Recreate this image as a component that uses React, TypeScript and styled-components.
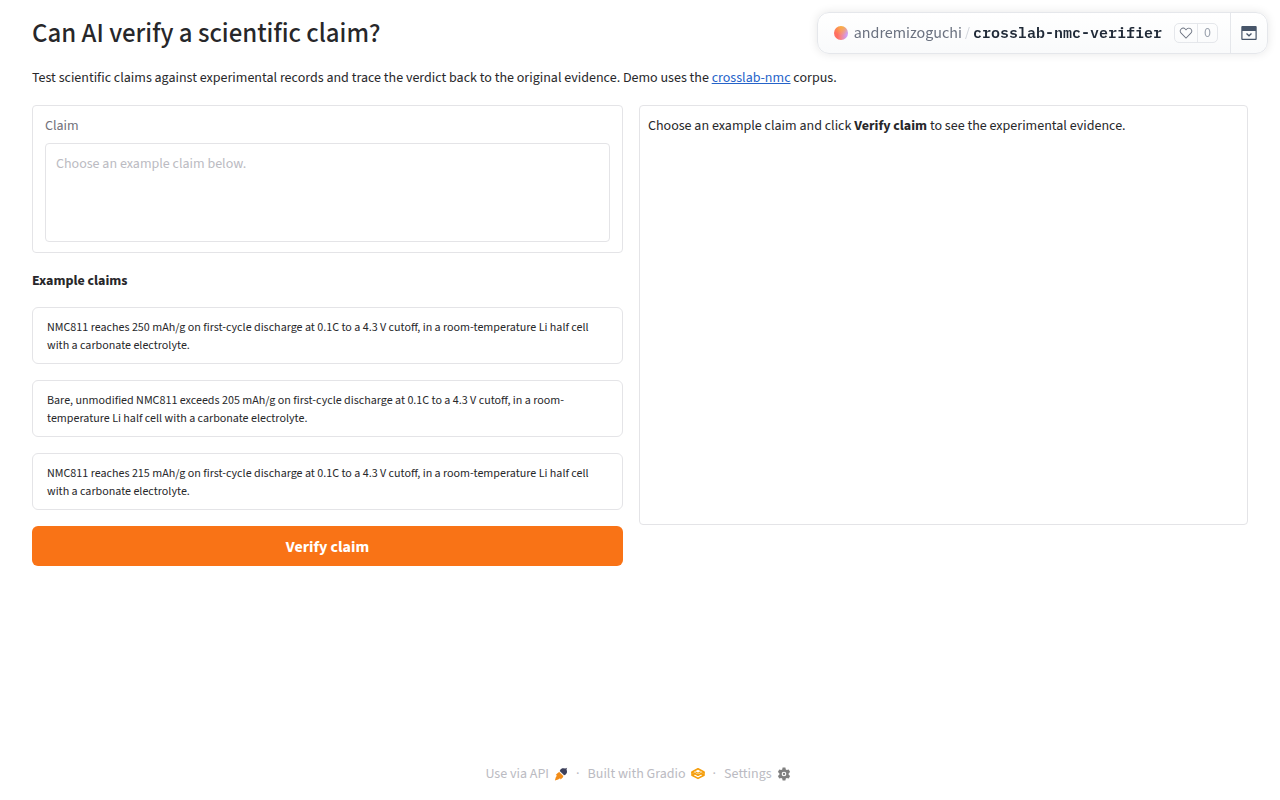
import React, { useState } from "react";
import styled, { createGlobalStyle } from "styled-components";

const sans = `"Source Sans 3", "Source Sans Pro", "Noto Sans CJK SC", sans-serif`;

const GlobalStyle = createGlobalStyle`
  *, *::before, *::after { box-sizing: border-box; }
  body {
    margin: 0;
    background: #ffffff;
    color: #27272a;
    font-family: ${sans};
    font-size: 14px;
    line-height: 20px;
  }
  button, textarea { font-family: inherit; }
`;

const Page = styled.div`
  display: flex;
  flex-direction: column;
  min-height: 100vh;
  padding: 16px 32px;
`;

const Main = styled.main`
  display: flex;
  flex-direction: column;
  flex: 1;
`;

const Title = styled.h1`
  margin: 0 0 17px;
  font-size: 27px;
  line-height: 35px;
  font-weight: 500;
`;

const Intro = styled.p`
  margin: 0 0 17px;
`;

const InlineLink = styled.a`
  color: #2563c9;
  text-decoration: underline;
`;

const Columns = styled.div`
  display: grid;
  grid-template-columns: minmax(0, 591fr) minmax(0, 609fr);
  gap: 16px;
  align-items: start;
`;

const Stack = styled.div`
  display: flex;
  flex-direction: column;
  gap: 16px;
`;

const Panel = styled.section`
  border: 1px solid #e4e4e7;
  border-radius: 4px;
  background: #ffffff;
`;

const ClaimPanel = styled(Panel)`
  display: flex;
  flex-direction: column;
  gap: 7px;
  padding: 10px 12px;
`;

const ResultPanel = styled(Panel)`
  min-height: 420px;
  padding: 10px 8px;
`;

const Label = styled.label`
  color: #71717a;
`;

const ClaimInput = styled.textarea`
  display: block;
  width: 100%;
  height: 99px;
  padding: 10px;
  border: 1px solid #e4e4e7;
  border-radius: 4px;
  background: #ffffff;
  color: #27272a;
  font-size: 14px;
  line-height: 20px;
  resize: none;
  &::placeholder { color: #bbbbc2; opacity: 1; }
`;

const Subheading = styled.h2`
  margin: 2px 0 0;
  font-size: 14px;
  line-height: 20px;
  font-weight: 700;
`;

const ExampleButton = styled.button`
  width: 100%;
  padding: 11px 14px 8px;
  border: 1px solid #e4e4e7;
  border-radius: 6px;
  background: #ffffff;
  color: #27272a;
  font-size: 12px;
  line-height: 18px;
  text-align: left;
  cursor: pointer;
`;

const VerifyButton = styled.button`
  width: 100%;
  height: 40px;
  padding: 2px 0 0;
  border: 0;
  border-radius: 6px;
  background: #f97316;
  color: #ffffff;
  font-size: 16px;
  line-height: 20px;
  font-weight: 700;
  cursor: pointer;
`;

const Footer = styled.footer`
  display: flex;
  justify-content: center;
  align-items: center;
  gap: 8px;
  padding-right: 4px;
  color: #bbbbc2;
  line-height: 20px;
`;

const FooterLink = styled.a`
  display: flex;
  align-items: center;
  gap: 5px;
  color: inherit;
  text-decoration: none;
`;

const SpaceBar = styled.header`
  position: fixed;
  top: 12px;
  right: 12px;
  display: flex;
  height: 42px;
  border: 1px solid #e5e7eb;
  border-radius: 12px;
  background: linear-gradient(to bottom, #ffffff, #f9fafb);
  box-shadow: 0 0 10px rgba(0, 0, 0, 0.1);
`;

const SpaceInfo = styled.div`
  display: flex;
  align-items: center;
  padding: 0 12px 0 16px;
  border-right: 1px solid #e5e7eb;
`;

const Avatar = styled.span`
  width: 14px;
  height: 14px;
  margin-right: 6px;
  border-radius: 50%;
  background:
    radial-gradient(circle at 55% 0%, #fbb03b 0%, rgba(251, 150, 60, 0) 60%),
    linear-gradient(90deg, #ff6f61 25%, #f6858c 50%, #cf9df5 90%);
`;

const Owner = styled.a`
  color: #6b7280;
  font-size: 16px;
  text-decoration: none;
`;

const Slash = styled.span`
  width: 11px;
  color: #d1d5db;
  font-size: 14px;
  text-align: center;
`;

const RepoName = styled.a`
  margin-right: 12px;
  color: #1f2937;
  font-family: "IBM Plex Mono", "Liberation Mono", monospace;
  font-size: 15px;
  font-weight: 600;
  text-decoration: none;
`;

const LikeGroup = styled.div`
  display: flex;
  height: 20px;
  border: 1px solid #e5e7eb;
  border-radius: 5px;
  overflow: hidden;
`;

const LikeButton = styled.button`
  display: flex;
  align-items: center;
  justify-content: center;
  width: 23px;
  padding: 0;
  border: 0;
  border-right: 1px solid #e5e7eb;
  background: none;
  color: #6b7280;
  cursor: pointer;
`;

const LikeCount = styled.button`
  width: 19px;
  padding: 0;
  border: 0;
  background: none;
  color: #9ca3af;
  font-size: 14px;
  line-height: 18px;
  cursor: pointer;
`;

const CollapseButton = styled.button`
  display: flex;
  align-items: center;
  justify-content: center;
  width: 36px;
  padding: 0;
  border: 0;
  background: none;
  color: #475569;
  cursor: pointer;
`;

const HeartIcon = () => (
  <svg width="14" height="14" viewBox="0 0 32 32" fill="currentColor" aria-hidden="true">
    <path d="M22.45 6a5.47 5.47 0 0 1 3.91 1.64 5.7 5.7 0 0 1 0 8L16 26.13 5.64 15.64a5.7 5.7 0 0 1 0-8 5.48 5.48 0 0 1 7.82 0l2.54 2.6 2.53-2.58A5.44 5.44 0 0 1 22.45 6m0-2a7.47 7.47 0 0 0-5.34 2.24L16 7.36l-1.11-1.12a7.49 7.49 0 0 0-10.68 0 7.72 7.72 0 0 0 0 10.82L16 29l11.79-11.94a7.72 7.72 0 0 0 0-10.82A7.49 7.49 0 0 0 22.45 4Z" />
  </svg>
);

const CollapseIcon = () => (
  <svg width="16" height="16" viewBox="0 0 16 16" fill="none" aria-hidden="true">
    <path fill="currentColor" fillRule="evenodd" d="M1.300 1h13.400a1 1 0 0 1 1 1v12a1 1 0 0 1-1 1H1.300a1 1 0 0 1-1-1V2a1 1 0 0 1 1-1ZM1.500 6v7.800h13V6h-13Z" />
    <path stroke="currentColor" strokeWidth="1.300" d="m5.500 8.500 2.500 2.300 2.500-2.300" />
  </svg>
);

const RocketIcon = () => (
  <svg width="14" height="14" viewBox="0 0 14 14" aria-hidden="true">
    <path fill="#3d405b" d="M13.200.800 12.500 2l.500 2.600c.1 1.200-.5 2.400-1.600 3.100l-1.300.5-4.400-4.300.7-1.200c.7-1 1.900-1.600 3.100-1.400l1.700.2Z" />
    <path fill="#f28c18" d="m5.500 4.700 4 4-.7 1.800-2.200 2.100-.5-1.300-2 1.300-3.200.9.800-3.100 1.200-1.900-1.200-.4 2-2.200Z" />
    <path fill="#fff" d="m5.400 4.200 4.400 4.300-.5.500-4.400-4.300Z" opacity=".8" />
  </svg>
);

const GradioIcon = () => (
  <svg width="14" height="14" viewBox="0 0 14 14" fill="none" stroke="#f59e0b" strokeWidth="1.600" strokeLinejoin="round" aria-hidden="true">
    <path d="M7 1.800 1 5l6 3.200L13 5Z" />
    <path d="M1 5v3.200l6 3.200 6-3.200V5M1 8.200l3-1.600M13 8.200l-3-1.600" />
    <path d="m4.300 4.800 2.700 1.400 2.700-1.400" strokeWidth="1.100" />
  </svg>
);

const GearIcon = () => (
  <svg width="14" height="14" viewBox="0 0 24 24" fill="#808080" aria-hidden="true">
    <path fillRule="evenodd" d="M9.600 1h4.800l.7 3.300 1.800 1 3.200-1.100 2.400 4.200-2.500 2.200v2.800l2.500 2.200-2.400 4.200-3.200-1.100-1.800 1-.7 3.300H9.600l-.7-3.300-1.800-1-3.200 1.100-2.400-4.200L4 13.400v-2.800L1.500 8.400l2.400-4.200 3.200 1.100 1.800-1ZM12 8a4 4 0 1 0 0 8 4 4 0 0 0 0-8Z" />
    <circle cx="12" cy="12" r="2" />
  </svg>
);

const examples = [
  "NMC811 reaches 250 mAh/g on first-cycle discharge at 0.1C to a 4.3 V cutoff, in a room-temperature Li half cell with a carbonate electrolyte.",
  "Bare, unmodified NMC811 exceeds 205 mAh/g on first-cycle discharge at 0.1C to a 4.3 V cutoff, in a room-temperature Li half cell with a carbonate electrolyte.",
  "NMC811 reaches 215 mAh/g on first-cycle discharge at 0.1C to a 4.3 V cutoff, in a room-temperature Li half cell with a carbonate electrolyte.",
];

export default function App() {
  const [claim, setClaim] = useState("");

  return (
    <>
      <GlobalStyle />
      <Page>
        <Main>
          <Title>Can AI verify a scientific claim?</Title>
          <Intro>
            Test scientific claims against experimental records and trace the verdict back to the
            original evidence. Demo uses the <InlineLink href="#corpus">crosslab-nmc</InlineLink>{" "}
            corpus.
          </Intro>
          <Columns>
            <Stack>
              <ClaimPanel>
                <Label htmlFor="claim">Claim</Label>
                <ClaimInput
                  id="claim"
                  placeholder="Choose an example claim below."
                  value={claim}
                  onChange={(event) => setClaim(event.target.value)}
                />
              </ClaimPanel>
              <Subheading>Example claims</Subheading>
              {examples.map((text) => (
                <ExampleButton key={text} type="button" onClick={() => setClaim(text)}>
                  {text}
                </ExampleButton>
              ))}
              <VerifyButton type="button">Verify claim</VerifyButton>
            </Stack>
            <ResultPanel>
              Choose an example claim and click <strong>Verify claim</strong> to see the
              experimental evidence.
            </ResultPanel>
          </Columns>
        </Main>
        <Footer>
          <FooterLink href="#api">
            Use via API <RocketIcon />
          </FooterLink>
          <span>·</span>
          <FooterLink href="#gradio">
            Built with Gradio <GradioIcon />
          </FooterLink>
          <span>·</span>
          <FooterLink href="#settings">
            Settings <GearIcon />
          </FooterLink>
        </Footer>
      </Page>
      <SpaceBar>
        <SpaceInfo>
          <Avatar />
          <Owner href="#owner">andremizoguchi</Owner>
          <Slash>/</Slash>
          <RepoName href="#repo">crosslab-nmc-verifier</RepoName>
          <LikeGroup>
            <LikeButton type="button" aria-label="Like">
              <HeartIcon />
            </LikeButton>
            <LikeCount type="button">0</LikeCount>
          </LikeGroup>
        </SpaceInfo>
        <CollapseButton type="button" aria-label="Collapse header">
          <CollapseIcon />
        </CollapseButton>
      </SpaceBar>
    </>
  );
}
